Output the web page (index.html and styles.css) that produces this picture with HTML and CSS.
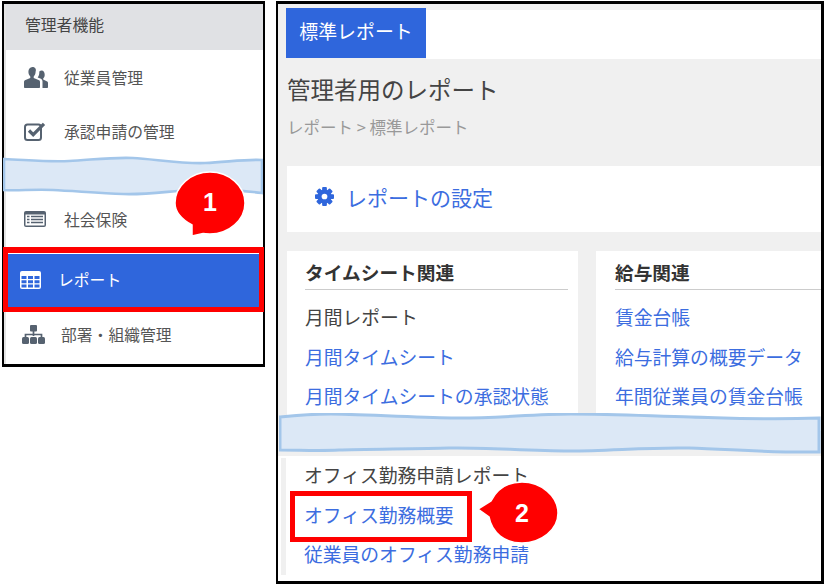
FILE: index.html
```html
<!DOCTYPE html>
<html lang="ja">
<head>
<meta charset="utf-8">
<title>レポート</title>
<link rel="stylesheet" href="styles.css">
</head>
<body>
<aside class="side">
  <div class="side-head">管理者機能</div>
  <div class="row row-a">
    <svg class="ico ico-users" viewBox="0 0 24 21"><path d="M8.5 0C5.8 0 4.4 2.2 4.4 4.8c0 2 .8 3.6 1.9 4.6v1.5L.9 13.2C.2 13.6 0 14.2 0 15v5.2c0 .4.3.8.8.8h14.4c.5 0 .8-.4.8-.8V15c0-.8-.2-1.4-.9-1.8l-5.4-2.3V9.4c1.1-1 1.9-2.6 1.9-4.6C12.600 2.200 11.200 0 8.500 0z"/><path d="M17.800 3.400c-1 0-1.900.4-2.500 1 .2 2.600-.5 4.600-1.600 6l3.200 1.400c1 .5 1.600 1.600 1.600 3V21h4.700c.5 0 .8-.3.8-.8v-4.300c0-.7-.3-1.200-.8-1.500l-4-1.800v-1.200c.9-.8 1.500-2.100 1.500-3.700 0-2.400-1.200-4.300-2.900-4.300z"/></svg>
    <span>従業員管理</span>
  </div>
  <div class="row row-a">
    <svg class="ico ico-check" viewBox="0 0 22 20"><rect x="1" y="3.500" width="16" height="15.500" rx="2.500" fill="none" stroke="#566270" stroke-width="2"/><path d="M5 9.500l4.200 4.200L20 2.800" fill="none" stroke="#566270" stroke-width="3.200"/></svg>
    <span>承認申請の管理</span>
  </div>
  <div class="row row-a row-gap">
    <svg class="ico ico-list" viewBox="0 0 22 16"><rect x="0" y="0" width="22" height="16" rx="2" fill="#566270"/><rect x="1.500" y="3.500" width="19" height="11" fill="#fff"/><path d="M3 5.500h2.500M3 8.500h2.500M3 11.500h2.500M7 5.500h12M7 8.500h12M7 11.500h12" stroke="#566270" stroke-width="1.700"/></svg>
    <span>社会保険</span>
  </div>
  <div class="row row-on">
    <svg class="ico ico-table" viewBox="0 0 21 18"><rect width="21" height="18" rx="2" fill="#fff"/><path d="M1.500 5h5v3h-5zM8 5h5v3H8zM14.500 5h5v3h-5zM1.500 9.300h5v3h-5zM8 9.300h5v3H8zM14.500 9.300h5v3h-5zM1.500 13.500h5v3h-5zM8 13.500h5v3H8zM14.500 13.500h5v3h-5z" fill="#2f66dc"/></svg>
    <span>レポート</span>
  </div>
  <div class="row row-c">
    <svg class="ico ico-map" viewBox="0 0 23 19"><rect x="8" y="0" width="7" height="6.500" rx="1" fill="#566270"/><path d="M11.500 6v5M3.500 12.500V9.500h16v3" fill="none" stroke="#566270" stroke-width="1.700"/><rect x="0" y="12" width="7" height="7" rx="1.500" fill="#566270"/><rect x="8" y="12" width="7" height="7" rx="1.500" fill="#566270"/><rect x="16" y="12" width="7" height="7" rx="1.500" fill="#566270"/></svg>
    <span>部署・組織管理</span>
  </div>
</aside>

<main class="main">
  <div class="upper">
    <div class="tabs">
      <div class="tab">標準レポート</div>
      <div class="tabs-fill"></div>
    </div>
    <div class="content">
      <h1 class="title">管理者用のレポート</h1>
      <div class="crumb">レポート &gt; 標準レポート</div>
      <div class="settings">
        <svg class="gear" viewBox="0 0 20 20"><g fill="#2f66dc"><rect x="7.500" y="0" width="5" height="20" rx="1"/><rect x="7.500" y="0" width="5" height="20" rx="1" transform="rotate(45 10 10)"/><rect x="7.500" y="0" width="5" height="20" rx="1" transform="rotate(90 10 10)"/><rect x="7.500" y="0" width="5" height="20" rx="1" transform="rotate(135 10 10)"/><circle cx="10" cy="10" r="7.500"/></g><circle cx="10" cy="10" r="3" fill="#fff"/></svg>
        <a class="settings-link">レポートの設定</a>
      </div>
      <div class="cols">
        <section class="col col-left">
          <h2 class="col-title">タイムシート関連</h2>
          <div class="item">月間レポート</div>
          <div class="item link">月間タイムシート</div>
          <div class="item link">月間タイムシートの承認状態</div>
        </section>
        <section class="col col-right">
          <h2 class="col-title">給与関連</h2>
          <div class="item link">賃金台帳</div>
          <div class="item link">給与計算の概要データ</div>
          <div class="item link">年間従業員の賃金台帳</div>
        </section>
      </div>
    </div>
  </div>
  <div class="lower">
    <div class="lower-inner">
      <div class="item">オフィス勤務申請レポート</div>
      <div class="item link">オフィス勤務概要</div>
      <div class="item link">従業員のオフィス勤務申請</div>
    </div>
  </div>
</main>

<svg class="wave wave-side" viewBox="0 0 260 42"><path d="M1 3C25 4 45 6 66 5S110 1 130 2s50 6 72 5 42-4 57-3v33c-25-3-50-4-71-3s-45 5-68 4-50-3-70-4-35 1-49 0z" fill="#dce8f6" stroke="#a3c6ea" stroke-width="2.600"/></svg>
<svg class="wave wave-main" viewBox="0 0 542 42"><path d="M1 4C20 2 35 1 52 1s80 3 120 4 80-4 120-4 80 2 120 3 70 3 128 1v34c-50 1-90-3-130-4s-80 3-120 3-90-4-120-3-90 1-110 2-40 0-59 0z" fill="#dce8f6" stroke="#a3c6ea" stroke-width="3"/></svg>

<div class="mark mark-side"></div>
<div class="mark mark-main"></div>

<svg class="callout callout-1" viewBox="0 0 74 74"><path d="M19 66V55C8 49 2 41 2 33 2 16 18 2 37 2s35 14 35 31-16 31-35 31c-3 0-5 0-7-.500z" fill="#f00" stroke="#fff" stroke-width="1.500"/><text x="37" y="41" class="num">1</text></svg>
<svg class="callout callout-2" viewBox="0 0 84 66"><path d="M1 29l13-8C20 9 31 2 45 2c19 0 36 14 36 31S64 63 45 63C28 63 15 53 12 37z" fill="#f00" stroke="#fff" stroke-width="1.500"/><text x="45" y="42" class="num">2</text></svg>
</body>
</html>
```
FILE: styles.css
```css
* { box-sizing: border-box; }
html, body { margin: 0; padding: 0; }
body {
  position: relative;
  width: 824px;
  height: 586px;
  overflow: hidden;
  background: #fff;
  display: flex;
  align-items: flex-start;
  padding: 1px 0 0 2px;
  gap: 11px;
  font-family: "Noto Sans CJK JP", "Noto Sans", sans-serif;
  color: #444;
}

/* left menu */
.side {
  width: 263px;
  height: 366px;
  border: 3px solid #000;
  border-left-width: 2px;
  border-right-width: 2px;
  background: #fff;
  flex: none;
  padding-left: 2px;
  box-shadow: inset 2px 0 0 #e4e4e4;
}
.side-head {
  height: 46px;
  background: #e0e1e4;
  font-size: 15.800px;
  line-height: 41px;
  padding-left: 19px;
  color: #444;
}
.row {
  height: 54px;
  display: flex;
  align-items: center;
  font-size: 15.800px;
  color: #555;
}
.row-a { padding-left: 18px; }
.row-a .ico { margin-right: 16px; }
.row-a span { margin-left: auto; width: 199px; }
.row-gap { margin-top: 34px; }
.row-on {
  height: 53px;
  margin: 8px 0 0 -2px;
  padding: 0 0 2px 16px;
  background: #2f66dc;
  color: #fff;
  gap: 17px;
}
.row-c {
  padding-left: 16px;
  gap: 16px;
}
.ico { flex: none; display: block; fill: #566270; }
.ico-users { width: 24px; height: 21px; }
.ico-check { width: 22px; height: 20px; }
.ico-list { width: 22px; height: 16px; }
.ico-table { width: 21px; height: 18px; }
.ico-map { width: 23px; height: 19px; }

/* right content */
.main {
  width: 548px;
  height: 583px;
  border: 3px solid #000;
  border-left-width: 2px;
  border-right-width: 3px;
  flex: none;
  background: #fff;
  overflow: hidden;
}
.upper {
  height: 452px;
  background: #f0f0f0;
  overflow: hidden;
  padding-top: 4px;
}
.tabs {
  display: flex;
  align-items: flex-start;
  margin-left: 8px;
  height: 52px;
}
.tab {
  width: 140px;
  height: 50px;
  background: #2f66dc;
  color: #fff;
  font-size: 18.900px;
  line-height: 46px;
  text-align: center;
}
.tabs-fill {
  flex: 1;
  height: 49px;
  margin-top: 2px;
  background: #fff;
}
.content { padding-left: 9px; }
.title {
  margin: 13px 0 0;
  font-size: 23.500px;
  font-weight: 400;
  line-height: 32px;
  color: #444;
}
.crumb {
  margin-top: 10px;
  font-size: 16.500px;
  line-height: 24px;
  color: #999;
}
.settings {
  margin-top: 27px;
  height: 66px;
  background: #fff;
  display: flex;
  align-items: center;
  padding: 0 0 5px 28px;
  gap: 12px;
}
.gear { width: 19px; height: 19px; flex: none; }
.settings-link { font-size: 21px; color: #3c6de0; }
.cols {
  display: flex;
  gap: 18px;
  margin-top: 19px;
}
.col {
  background: #fff;
  height: 180px;
  padding-left: 18px;
}
.col-left { width: 291px; padding-right: 10px; }
.col-right { flex: 1; padding-left: 19px; }
.col-title {
  margin: 0;
  height: 39px;
  border-bottom: 1px solid #ccc;
  font-size: 18.700px;
  font-weight: 700;
  line-height: 42px;
  color: #333;
}
.item {
  height: 39.500px;
  line-height: 39.500px;
  font-size: 18.800px;
  color: #444;
  white-space: nowrap;
}
.col-title + .item { margin-top: 7px; }
.link { color: #3c6de0; }

.lower { padding: 2px 0 0 3px; background: #fff; }
.lower-inner {
  border-left: 5px solid #f0f0f0;
  height: 117px;
  padding-left: 18px;
}
.lower .item { position: relative; top: -3px; }

/* annotations */
.wave { position: absolute; display: block; }
.wave-side { left: 3px; top: 156px; width: 260px; height: 42px; }
.wave-main { left: 279px; top: 413px; width: 542px; height: 42px; }
.mark { position: absolute; border: 5px solid #f00; }
.mark-side { left: 3px; top: 247px; width: 261px; height: 65px; border-width: 6px 5px 5px; }
.mark-main { left: 290px; top: 491px; width: 182px; height: 51px; }
.callout { position: absolute; display: block; }
.callout-1 { left: 173px; top: 170px; width: 74px; height: 74px; }
.callout-2 { left: 477px; top: 480px; width: 84px; height: 66px; }
.num {
  font-family: "Liberation Sans", Arial, sans-serif;
  font-size: 25px;
  font-weight: 700;
  fill: #fff;
  text-anchor: middle;
}
```
